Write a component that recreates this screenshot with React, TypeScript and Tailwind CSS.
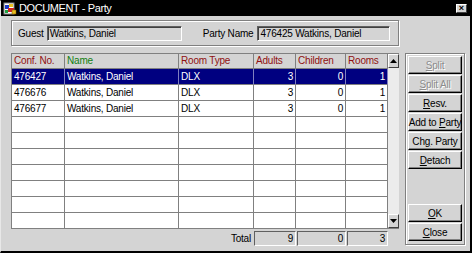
import React from "react";

const font = "font-['Liberation_Sans',Arial,sans-serif]";

const rows = [
  { conf: "476427", name: "Watkins, Daniel", type: "DLX", adults: 3, children: 0, rooms: 1, selected: true },
  { conf: "476676", name: "Watkins, Daniel", type: "DLX", adults: 3, children: 0, rooms: 1 },
  { conf: "476677", name: "Watkins, Daniel", type: "DLX", adults: 3, children: 0, rooms: 1 },
  ...Array.from({ length: 7 }, () => null),
];

function Btn({ children, disabled }: { children: React.ReactNode; disabled?: boolean }) {
  return (
    <div
      className={
        "h-[18px] flex items-center justify-center border-t border-l border-white border-r border-b border-r-black border-b-black shadow-[inset_-1px_-1px_0_#808080] text-[10px] tracking-[-0.2px] whitespace-pre " +
        (disabled ? "text-[#8c8c8c] [text-shadow:1px_1px_0_#fff]" : "text-black")
      }
    >
      <span>{children}</span>
    </div>
  );
}

function DocIcon() {
  return (
    <svg width="14" height="13" viewBox="0 0 14 13">
      <rect x="1" y="1" width="10" height="11" fill="#fff" stroke="#808080" />
      <rect x="2" y="3" width="4" height="4" fill="#1e3cc8" />
      <rect x="6" y="2" width="4" height="3" fill="#e8c020" />
      <rect x="5" y="6" width="6" height="4" fill="#d02020" />
      <rect x="2" y="8" width="3" height="3" fill="#20a040" />
      <rect x="9" y="8" width="4" height="4" fill="#e8c020" stroke="#805000" strokeWidth="0.5" />
    </svg>
  );
}

export default function App() {
  return (
    <div className={`w-[472px] h-[253px] bg-[#d4d4d4] border-l border-t border-l-[#e8e8e8] border-t-black border-r-2 border-b-2 border-r-black border-b-black flex flex-col overflow-hidden ${font}`}>
      {/* title bar */}
      <div className="h-[15px] bg-black flex items-center pl-[2px] pr-[3px] shrink-0">
        <DocIcon />
        <span className="ml-[2px] text-white text-[11px] leading-none tracking-[-0.4px]">DOCUMENT - Party</span>
        <div className="ml-auto w-[11px] h-[9px] bg-[#d4d4d4] border-t border-l border-white border-r border-b border-r-[#404040] border-b-[#404040] flex items-center justify-center text-[9px] leading-none font-bold text-black">
          ×
        </div>
      </div>

      <div className="flex flex-col pl-[10px] pt-[4px]">
        {/* guest group box */}
        <div className="w-[388px] h-[26px] border border-[#808080] shadow-[1px_1px_0_#fff,inset_1px_1px_0_#fff] flex items-center text-[10px] tracking-[-0.2px]">
          <span className="ml-[6px] mr-[3px]">Guest</span>
          <div className="w-[135px] h-[15px] border border-[#606060] border-b-white border-r-white shadow-[inset_1px_1px_0_#404040] pl-[2px] leading-[13px]">
            Watkins, Daniel
          </div>
          <span className="ml-[21px] mr-[4px]">Party Name</span>
          <div className="w-[133px] h-[15px] border border-[#606060] border-b-white border-r-white shadow-[inset_1px_1px_0_#404040] pl-[2px] leading-[13px]">
            476425 Watkins, Daniel
          </div>
        </div>

        <div className="flex mt-[7px]">
          <div className="flex flex-col">
            {/* grid + scrollbar */}
            <div className="flex border-l border-t border-[#808080] h-[176px]">
              <div className="grid grid-cols-[53px_114px_75px_42px_50px_42px] grid-rows-[15px_repeat(10,16px)] text-[10px] tracking-[-0.2px]">
                {["Conf. No.", "Name", "Room Type", "Adults", "Children", "Rooms"].map((h) => (
                  <div
                    key={h}
                    className={
                      "border-r border-b border-[#808080] pl-[2px] leading-[14px] " +
                      (h === "Name" ? "text-[#108010]" : "text-[#901010]")
                    }
                  >
                    {h}
                  </div>
                ))}
                {rows.map((r, i) => {
                  const cell = "border-r border-b border-[#808080] leading-[15px] " + (r?.selected ? "bg-[#000080] text-white border-r-[#8080c0]" : "bg-white text-black");
                  return (
                    <React.Fragment key={i}>
                      <div className={cell + " pl-[2px]"}>{r?.conf}</div>
                      <div className={cell + " pl-[2px]"}>{r?.name}</div>
                      <div className={cell + " pl-[2px]"}>{r?.type}</div>
                      <div className={cell + " text-right pr-[2px]"}>{r?.adults}</div>
                      <div className={cell + " text-right pr-[2px]"}>{r?.children}</div>
                      <div className={cell + " text-right pr-[2px]"}>{r?.rooms}</div>
                    </React.Fragment>
                  );
                })}
              </div>
              <div className="w-[11px] flex flex-col bg-[#ececec] border-b border-[#808080]">
                <div className="h-[14px] bg-[#d4d4d4] border-t border-l border-white border-r border-b border-r-[#404040] border-b-[#404040] flex items-center justify-center">
                  <svg width="7" height="4" viewBox="0 0 7 4"><path d="M3.5 0 L7 4 L0 4 Z" fill="#000" /></svg>
                </div>
                <div className="flex-1" />
                <div className="h-[14px] bg-[#d4d4d4] border-t border-l border-white border-r border-b border-r-[#404040] border-b-[#404040] flex items-center justify-center">
                  <svg width="7" height="4" viewBox="0 0 7 4"><path d="M0 0 L7 0 L3.5 4 Z" fill="#000" /></svg>
                </div>
              </div>
            </div>

            {/* totals */}
            <div className="flex items-center mt-[2px] text-[10px] tracking-[-0.2px]">
              <div className="w-[243px] text-right pr-[3px]">Total</div>
              <div className="w-[42px] h-[15px] border border-[#606060] border-b-white border-r-white text-right pr-[2px] leading-[13px]">9</div>
              <div className="w-[49px] ml-[1px] h-[15px] border border-[#606060] border-b-white border-r-white text-right pr-[2px] leading-[13px]">0</div>
              <div className="w-[41px] ml-[1px] h-[15px] border border-[#606060] border-b-white border-r-white text-right pr-[2px] leading-[13px]">3</div>
            </div>
          </div>

          {/* button panel */}
          <div className="ml-[6px] w-[60px] h-[192px] border border-[#808080] shadow-[1px_1px_0_#fff,inset_1px_1px_0_#fff] flex flex-col px-[2px] pt-[2px] pb-[3px] gap-[1px]">
            <Btn disabled><u>S</u>plit</Btn>
            <Btn disabled><u>S</u>plit All</Btn>
            <Btn><u>R</u>esv.</Btn>
            <Btn>Add to <u>P</u>arty</Btn>
            <Btn>Ch<u>g</u>. Party</Btn>
            <Btn><u>D</u>etach</Btn>
            <div className="flex-1" />
            <Btn><u>O</u>K</Btn>
            <Btn><u>C</u>lose</Btn>
          </div>
        </div>
      </div>
    </div>
  );
}
